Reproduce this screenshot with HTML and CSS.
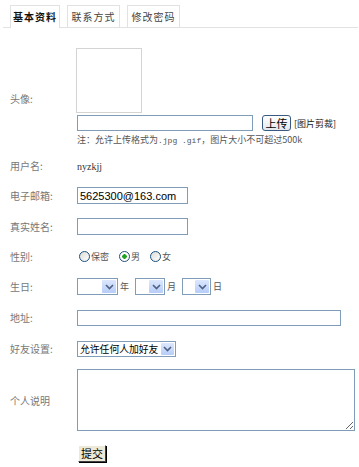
FILE: index.html
```html
<!DOCTYPE html>
<html lang="zh-CN">
<head>
    <meta charset="UTF-8">
    <title>个人资料</title>
    <link rel="stylesheet" href="styles.css">
</head>
<body>
<div class="tabs">
    <div class="tab active">基本资料</div>
    <div class="tab">联系方式</div>
    <div class="tab">修改密码</div>
</div>
<table class="form" cellspacing="0" cellpadding="0">
    <tr class="row-avatar">
        <td class="label">头像:</td>
        <td>
            <div class="avatar"></div>
            <div class="upload">
                <input type="text" class="text file">
                <button class="btn-upload">上传</button>
                <span class="crop">[图片剪裁]</span>
            </div>
            <div class="note">注：允许上传格式为<span class="mono">.jpg .gif</span>，图片大小不可超过500k</div>
        </td>
    </tr>
    <tr class="row-user">
        <td class="label">用户名:</td>
        <td><span class="username">nyzkjj</span></td>
    </tr>
    <tr class="row-31">
        <td class="label">电子邮箱:</td>
        <td><input type="text" class="text short" value="5625300@163.com"></td>
    </tr>
    <tr class="row-31">
        <td class="label">真实姓名:</td>
        <td><input type="text" class="text short"></td>
    </tr>
    <tr class="row-sex">
        <td class="label">性别:</td>
        <td>
            <div class="radios">
                <label class="radio"><input type="radio" name="sex">保密</label>
                <label class="radio"><input type="radio" name="sex" checked>男</label>
                <label class="radio"><input type="radio" name="sex">女</label>
            </div>
        </td>
    </tr>
    <tr class="row-31">
        <td class="label">生日:</td>
        <td>
            <div class="birth">
                <span class="select w-year"><select></select><span class="arrow"><svg width="9" height="6" viewBox="0 0 9 6"><path d="M1 1 L4.5 4.5 L8 1" fill="none" stroke="#4d6185" stroke-width="1.6"/></svg></span></span>
                <span class="unit">年</span>
                <span class="select w-month"><select></select><span class="arrow"><svg width="9" height="6" viewBox="0 0 9 6"><path d="M1 1 L4.5 4.5 L8 1" fill="none" stroke="#4d6185" stroke-width="1.6"/></svg></span></span>
                <span class="unit">月</span>
                <span class="select w-day"><select></select><span class="arrow"><svg width="9" height="6" viewBox="0 0 9 6"><path d="M1 1 L4.5 4.5 L8 1" fill="none" stroke="#4d6185" stroke-width="1.6"/></svg></span></span>
                <span class="unit">日</span>
            </div>
        </td>
    </tr>
    <tr class="row-31">
        <td class="label">地址:</td>
        <td><input type="text" class="text long"></td>
    </tr>
    <tr class="row-30">
        <td class="label">好友设置:</td>
        <td>
            <span class="select w-friend"><select><option>允许任何人加好友</option></select><span class="arrow"><svg width="9" height="6" viewBox="0 0 9 6"><path d="M1 1 L4.5 4.5 L8 1" fill="none" stroke="#4d6185" stroke-width="1.6"/></svg></span></span>
        </td>
    </tr>
    <tr class="row-intro">
        <td class="label">个人说明</td>
        <td><textarea class="intro"></textarea></td>
    </tr>
    <tr class="row-submit">
        <td class="label"></td>
        <td><button class="btn-submit">提交</button></td>
    </tr>
</table>
</body>
</html>
```

FILE: styles.css
```css
body {
    margin: 0;
    background: #fff;
    font-family: "Noto Sans CJK SC", "DejaVu Sans", sans-serif;
    font-size: 10px;
    color: #555;
}

/* tab bar */
.tabs {
    display: flex;
    gap: 6px;
    margin: 5px 1px 0 3px;
    padding-left: 7px;
    border-bottom: 1px solid #e2e2e2;
    height: 22px;
}

.tab {
    width: 50px;
    height: 22px;
    box-sizing: border-box;
    border: 1px solid #e2e2e2;
    border-bottom: none;
    background: #fff;
    color: #444;
    font-size: 10px;
    letter-spacing: 1px;
    line-height: 21px;
    text-align: center;
}

.tab + .tab {
    width: 53px;
    margin-left: 1px;
}

.tab.active {
    height: 23px;
    font-weight: bold;
    color: #111;
}

/* form table */
.form {
    margin: 18px 0 0 10px;
    border-collapse: collapse;
}

.form td {
    padding: 0;
    vertical-align: middle;
}

.label {
    width: 67px;
    color: #777;
    font-size: 10px;
}

.row-avatar { height: 104px; }
.row-user { height: 30px; }
.row-31 { height: 31px; }
.row-30 { height: 30px; }
.row-sex { height: 29px; }
.row-intro { height: 74px; }
.row-submit { height: 32px; }

.avatar {
    width: 64px;
    height: 63px;
    border: 1px solid #d4d4d4;
    margin-left: -1px;
}

.upload {
    display: flex;
    align-items: center;
    margin-top: 2px;
    height: 16px;
}

.text {
    box-sizing: border-box;
    height: 16px;
    border: 1px solid #7f9db9;
    padding: 0 2px;
    font-family: "Liberation Sans", Arial, sans-serif;
    font-size: 11px;
    color: #000;
    outline: none;
}

.file { width: 176px; }
.short { width: 111px; height: 17px; }
.long { width: 264px; }

.btn-upload {
    margin-left: 9px;
    height: 16px;
    width: 29px;
    padding: 0;
    border: 1px solid #3b5a82;
    border-radius: 3px;
    background: linear-gradient(#ffffff, #e4e8ee);
    font-family: "Noto Sans CJK SC", sans-serif;
    font-size: 11px;
    line-height: 13px;
    color: #000;
}

.crop {
    margin-left: 3px;
    font-size: 9px;
    color: #222;
}

.note {
    margin-top: 2px;
    font-size: 9px;
    line-height: 14px;
    color: #555;
}

.mono {
    font-family: "Liberation Mono", monospace;
    font-size: 8px;
}

.username {
    font-family: "Liberation Serif", serif;
    font-size: 10px;
    color: #333;
}

/* radios */
.radios {
    display: flex;
    align-items: center;
}

.radio {
    display: inline-flex;
    align-items: center;
    margin-right: 8px;
    font-size: 9px;
    color: #555;
}

.radio input {
    appearance: none;
    -webkit-appearance: none;
    width: 11px;
    height: 11px;
    margin: 0 1px 0 2px;
    border: 1px solid #1c5180;
    border-radius: 50%;
    background: linear-gradient(135deg, #dcdcd7, #ffffff);
    box-sizing: border-box;
}

.radio input:checked {
    background: radial-gradient(circle, #21a121 0 2px, #fff 2.5px);
}

/* selects */
.birth {
    display: flex;
    align-items: center;
}

.select {
    display: inline-flex;
    vertical-align: middle;
    box-sizing: border-box;
    height: 17px;
    border: 1px solid #7f9db9;
    background: #fff;
    padding: 1px;
}

.select select {
    appearance: none;
    -webkit-appearance: none;
    flex: 1;
    min-width: 0;
    border: none;
    padding: 0 2px;
    background: transparent;
    font-family: "Noto Sans CJK SC", sans-serif;
    font-size: 10px;
    line-height: 13px;
    color: #000;
    outline: none;
}

.arrow {
    width: 14px;
    display: flex;
    align-items: center;
    justify-content: center;
    background: linear-gradient(#dce7fd, #b7cdf8);
    border-radius: 1px;
}

.w-year { width: 41px; }
.w-month { width: 30px; }
.w-day { width: 29px; }
.w-friend { width: 99px; height: 16px; }

.w-friend select {
    padding: 0 0 0 1px;
    font-size: 9.8px;
}

.w-friend .arrow {
    width: 13px;
    margin-left: 1px;
}

.unit {
    margin: 0 6px 0 2px;
    font-size: 9px;
    color: #555;
}

.intro {
    display: block;
    box-sizing: border-box;
    width: 278px;
    height: 62px;
    border: 1px solid #7f9db9;
    resize: both;
    outline: none;
}

.btn-submit {
    height: 17px;
    width: 28px;
    padding: 0;
    margin-left: 1px;
    border: 1px solid;
    border-color: #fff #404040 #404040 #fff;
    box-shadow: 1px 1px 0 #000;
    background: #ece9d8;
    font-family: "Noto Sans CJK SC", sans-serif;
    font-size: 11px;
    line-height: 14px;
    color: #000;
}
```
